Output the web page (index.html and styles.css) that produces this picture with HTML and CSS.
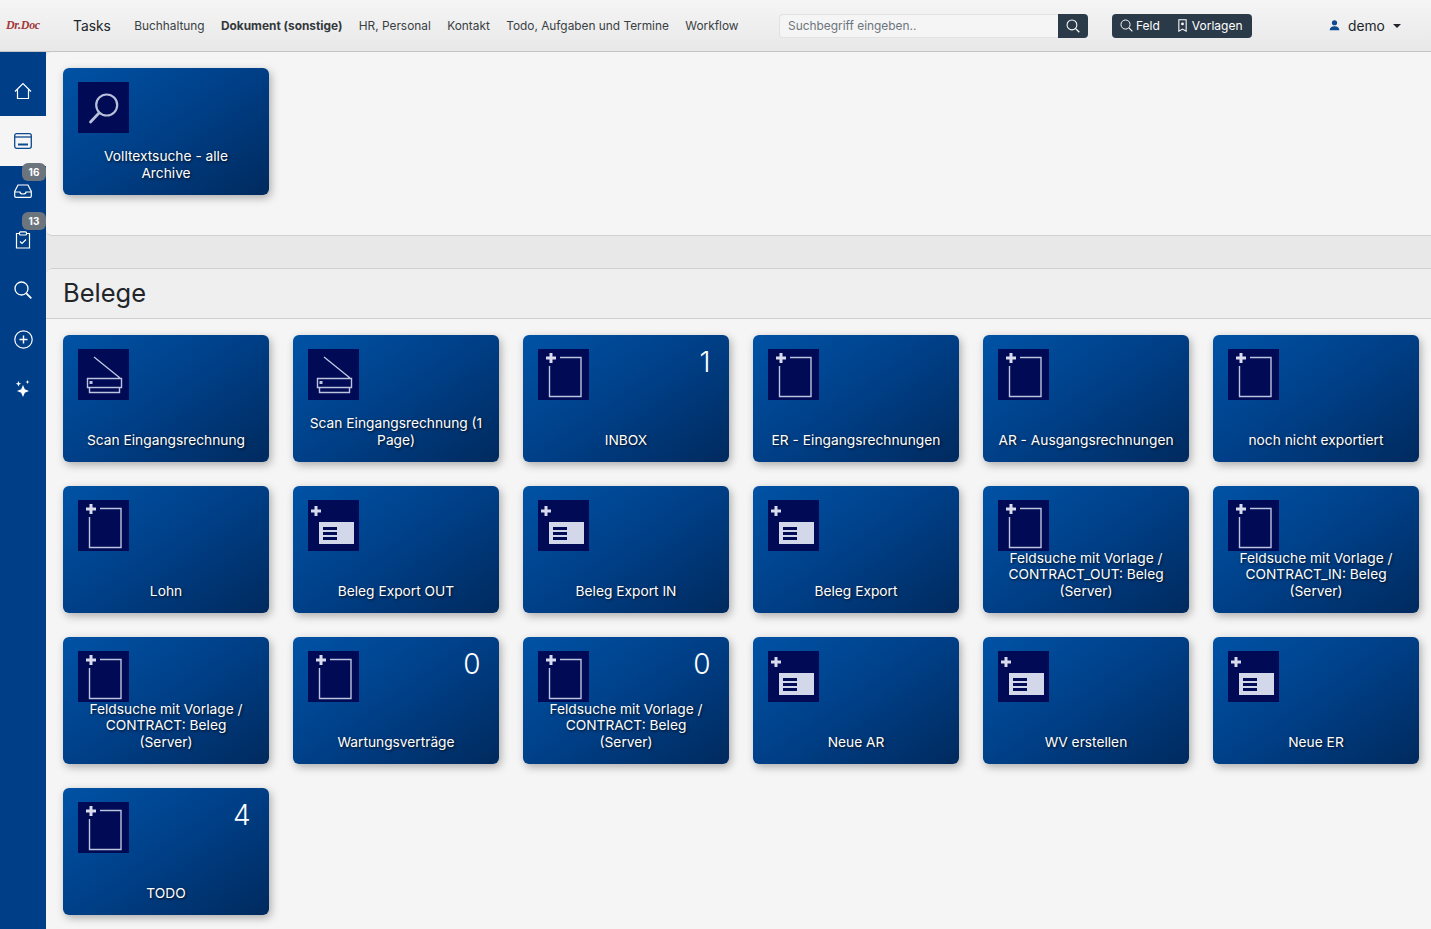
FILE: index.html
```html
<!DOCTYPE html>
<html lang="de">
<head>
<meta charset="utf-8">
<title>Dr.Doc</title>
<link rel="stylesheet" href="styles.css">
</head>
<body>
<svg class="defs" aria-hidden="true">
  <defs>
    <symbol id="i-doc" viewBox="0 0 51 51">
      <path d="M22 8.500H43V47.500H11.500V17" fill="none" stroke="#bcc4e0" stroke-width="1.400"/>
      <path d="M11.500 4h3v3.500H18v3h-3.500V14h-3v-3.500H8v-3h3.500z" fill="#d8dcee"/>
    </symbol>
    <symbol id="i-form" viewBox="0 0 51 51">
      <rect x="11" y="22" width="35" height="22" fill="#d2d8ea"/>
      <path d="M15 27h14v3H15zM15 32h14v3H15zM15 37h14v3H15z" fill="#000a55"/>
      <path d="M6.500 6h3v3.500H13v3H9.500V16h-3v-3.500H3v-3h3.500z" fill="#d8dcee"/>
    </symbol>
    <symbol id="i-scan" viewBox="0 0 51 51">
      <path d="M16 8L42 29M9.500 29.500H43.500V38.500H9.500ZM11.500 38.500V43.500H41.500V38.500" fill="none" stroke="#bcc4e0" stroke-width="1.400"/>
      <rect x="11.500" y="32" width="3" height="3" fill="#bcc4e0"/>
    </symbol>
    <symbol id="i-find" viewBox="0 0 51 51">
      <circle cx="28.700" cy="23" r="10.500" fill="none" stroke="#b8bfd8" stroke-width="2.200"/>
      <path d="M21 31L12.500 40" fill="none" stroke="#b8bfd8" stroke-width="2.800" stroke-linecap="round"/>
    </symbol>
  </defs>
</svg>

<header class="topbar">
  <div class="logo">Dr.Doc</div>
  <nav class="menu">
    <a class="menu-main">Tasks</a>
    <a>Buchhaltung</a>
    <a class="menu-active">Dokument (sonstige)</a>
    <a>HR, Personal</a>
    <a>Kontakt</a>
    <a>Todo, Aufgaben und Termine</a>
    <a>Workflow</a>
  </nav>
  <form class="search">
    <input class="search-input" type="text" placeholder="Suchbegriff eingeben..">
    <button class="search-btn" type="button" aria-label="Suche">
      <svg width="14" height="14" viewBox="0 0 16 16" fill="none" stroke="#fff" stroke-width="1.200"><circle cx="6.800" cy="6.800" r="5.600"/><path d="M11 11l4.200 4.200" stroke-width="1.500"/></svg>
    </button>
  </form>
  <div class="tools">
    <span class="tool">
      <svg width="13" height="13" viewBox="0 0 16 16" fill="none" stroke="#fff" stroke-width="1.200"><circle cx="6.800" cy="6.800" r="5.600"/><path d="M11 11l4.200 4.200" stroke-width="1.500"/></svg>Feld
    </span>
    <span class="tool tool-tpl">
      <svg width="11" height="13" viewBox="0 0 12 16" fill="none" stroke="#fff" stroke-width="1.300"><path d="M1.500 1h9v14L6 12.500 1.500 15z"/><circle cx="6" cy="6" r="1.700" fill="#fff" stroke="none"/></svg>Vorlagen
    </span>
  </div>
  <div class="user">
    <svg width="11" height="11" viewBox="0 0 16 16" fill="#0d4a8f"><circle cx="8" cy="4" r="3.800"/><path d="M1 15c0-4 3-6 7-6s7 2 7 6z"/></svg>
    <span>demo</span>
    <i class="caret"></i>
  </div>
</header>

<div class="shell">
  <aside class="sidebar">
    <a class="side-item">
      <svg width="18" height="18" viewBox="0 0 18 18" fill="none" stroke="#fff" stroke-width="1.200"><path d="M1 9.500L9 1.500l8 8M3.500 7.500V16.500h11V7.500"/></svg>
    </a>
    <a class="side-item side-active">
      <svg width="18" height="16" viewBox="0 0 18 16" fill="none" stroke="#0d4a8f" stroke-width="1.300"><rect x="0.700" y="0.700" width="16.600" height="14.600" rx="2"/><path d="M1 4h16"/><path d="M4 11.500h10" stroke-width="2"/></svg>
    </a>
    <a class="side-item">
      <svg width="18" height="14" viewBox="0 0 18 14" fill="none" stroke="#fff" stroke-width="1.200"><path d="M4 1h10l3.300 6.500V12a1.300 1.300 0 0 1-1.300 1.300H2A1.300 1.300 0 0 1 .7 12V7.500zM.7 8H6c0 1.500 1.200 2 3 2s3-.5 3-2h5.300"/></svg>
      <span class="badge">16</span>
    </a>
    <a class="side-item">
      <svg width="16" height="18" viewBox="0 0 16 18" fill="none" stroke="#fff" stroke-width="1.200"><path d="M4.500 2.500H1.500V17h13V2.500h-3"/><rect x="4.500" y="0.800" width="7" height="3.200" rx="1"/><path d="M5 10.500l2 2 4-4"/></svg>
      <span class="badge">13</span>
    </a>
    <a class="side-item">
      <svg width="18" height="18" viewBox="0 0 18 18" fill="none" stroke="#fff" stroke-width="1.300"><circle cx="7.500" cy="7.500" r="6.500"/><path d="M12.300 12.300l5 5" stroke-width="1.800"/></svg>
    </a>
    <a class="side-item">
      <svg width="19" height="19" viewBox="0 0 19 19" fill="none" stroke="#fff" stroke-width="1.200"><circle cx="9.500" cy="9.500" r="8.700"/><path d="M9.500 5.500v8M5.500 9.500h8" stroke-width="1.400"/></svg>
    </a>
    <a class="side-item">
      <svg width="16" height="19" viewBox="0 0 16 18" fill="#fff"><path d="M8 5.500l1.800 4.200L14 11.500l-4.200 1.800L8 17.500l-1.800-4.200L2 11.500l4.200-1.800zM3.500 1.500l.8 1.900 1.900.8-1.900.8-.8 1.900-.8-1.900L.8 4.200l1.900-.8zM12.500.5l.6 1.400 1.400.6-1.400.6-.6 1.400-.6-1.400-1.400-.6 1.400-.6z"/></svg>
    </a>
  </aside>

  <main class="content">
    <section class="panel panel-top">
      <div class="grid">
        <a class="card"><svg class="card-icon"><use href="#i-find"/></svg><span class="card-label">Volltextsuche - alle Archive</span></a>
      </div>
    </section>
    <div class="band"></div>
    <section class="panel">
      <h2 class="panel-title">Belege</h2>
      <div class="grid">
        <a class="card"><svg class="card-icon"><use href="#i-scan"/></svg><span class="card-label">Scan Eingangsrechnung</span></a>
        <a class="card"><svg class="card-icon"><use href="#i-scan"/></svg><span class="card-label">Scan Eingangsrechnung (1 Page)</span></a>
        <a class="card"><svg class="card-icon"><use href="#i-doc"/></svg><span class="card-count">1</span><span class="card-label">INBOX</span></a>
        <a class="card"><svg class="card-icon"><use href="#i-doc"/></svg><span class="card-label">ER - Eingangsrechnungen</span></a>
        <a class="card"><svg class="card-icon"><use href="#i-doc"/></svg><span class="card-label">AR - Ausgangsrechnungen</span></a>
        <a class="card"><svg class="card-icon"><use href="#i-doc"/></svg><span class="card-label">noch nicht exportiert</span></a>

        <a class="card"><svg class="card-icon"><use href="#i-doc"/></svg><span class="card-label">Lohn</span></a>
        <a class="card"><svg class="card-icon"><use href="#i-form"/></svg><span class="card-label">Beleg Export OUT</span></a>
        <a class="card"><svg class="card-icon"><use href="#i-form"/></svg><span class="card-label">Beleg Export IN</span></a>
        <a class="card"><svg class="card-icon"><use href="#i-form"/></svg><span class="card-label">Beleg Export</span></a>
        <a class="card"><svg class="card-icon"><use href="#i-doc"/></svg><span class="card-label">Feldsuche mit Vorlage / CONTRACT_OUT: Beleg (Server)</span></a>
        <a class="card"><svg class="card-icon"><use href="#i-doc"/></svg><span class="card-label">Feldsuche mit Vorlage / CONTRACT_IN: Beleg (Server)</span></a>

        <a class="card"><svg class="card-icon"><use href="#i-doc"/></svg><span class="card-label">Feldsuche mit Vorlage / CONTRACT: Beleg (Server)</span></a>
        <a class="card"><svg class="card-icon"><use href="#i-doc"/></svg><span class="card-count">0</span><span class="card-label">Wartungsverträge</span></a>
        <a class="card"><svg class="card-icon"><use href="#i-doc"/></svg><span class="card-count">0</span><span class="card-label">Feldsuche mit Vorlage / CONTRACT: Beleg (Server)</span></a>
        <a class="card"><svg class="card-icon"><use href="#i-form"/></svg><span class="card-label">Neue AR</span></a>
        <a class="card"><svg class="card-icon"><use href="#i-form"/></svg><span class="card-label">WV erstellen</span></a>
        <a class="card"><svg class="card-icon"><use href="#i-form"/></svg><span class="card-label">Neue ER</span></a>

        <a class="card"><svg class="card-icon"><use href="#i-doc"/></svg><span class="card-count">4</span><span class="card-label">TODO</span></a>
      </div>
    </section>
  </main>
</div>
</body>
</html>
```
FILE: styles.css
```css
* { box-sizing: border-box; }
html, body { margin: 0; height: 100%; overflow: hidden; }
body { font-family: Inter, "Liberation Sans", sans-serif; background: #003f87; color: #212529; }
.defs { width: 0; height: 0; display: block; }

.topbar {
  height: 52px;
  display: flex;
  align-items: center;
  background: linear-gradient(#f5f5f5, #e8e8e8);
  border-bottom: 1px solid #c4c4c4;
}
.logo {
  width: 73px;
  padding-left: 6px;
  font: italic bold 12px "Liberation Serif", serif;
  letter-spacing: -0.300px;
  color: #a33a3a;
}
.menu { display: flex; align-items: center; gap: 16.400px; font-size: 11.860px; color: #3a3f44; width: 706px; }
.menu-main { font-size: 13.800px; color: #212529; margin-right: 7px; }
.menu-active { font-weight: 700; color: #33383d; }

.search { display: flex; width: 309px; height: 24px; }
.search-input {
  flex: 1;
  min-width: 0;
  border: 1px solid #e2e2e2;
  border-right: 0;
  border-radius: 4px 0 0 4px;
  background: #f5f5f5;
  padding: 0 8px;
  font: 11.900px Inter, sans-serif;
}
.search-input::placeholder { color: #6c757d; opacity: 1; }
.search-btn {
  width: 30px;
  border: 0;
  padding: 0;
  background: #2b3a48;
  border-radius: 0 4px 4px 0;
  display: flex;
  align-items: center;
  justify-content: center;
}
.tools {
  margin-left: 24px;
  width: 140px;
  height: 24px;
  display: flex;
  align-items: center;
  gap: 17px;
  padding-left: 8px;
  background: #2b3a48;
  border-radius: 4px;
  color: #fff;
  font-size: 12px;
}
.tool { display: flex; align-items: center; gap: 3px; }
.tool-tpl { gap: 4px; }
.user { margin-left: 77px; display: flex; align-items: center; font-size: 13.800px; color: #212529; }
.user span { margin-left: 8px; }
.caret {
  margin-left: 8px;
  border-top: 4px solid #212529;
  border-left: 4px solid transparent;
  border-right: 4px solid transparent;
}

.shell { display: flex; height: 877px; }
.sidebar { width: 46px; flex: none; padding-top: 14.600px; background: #003f87; }
.side-item {
  position: relative;
  height: 49.600px;
  display: flex;
  align-items: center;
  justify-content: center;
  width: 46px;
}
.side-active { background: #f5f5f5; }
.badge {
  position: absolute;
  right: 0;
  top: -3px;
  width: 24px;
  height: 18px;
  border-radius: 6px;
  background: #6c757d;
  color: #fff;
  font-size: 10px;
  font-weight: 700;
  line-height: 18px;
  text-align: center;
}

.content { flex: 1; min-width: 0; background: #e8e8e8; overflow: hidden; }
.panel { background: #f5f5f5; padding-bottom: 16px; border-top-left-radius: 6px; overflow: hidden; }
.panel-top {
  height: 184px;
  padding-top: 16px;
  border-bottom: 1px solid #cfcfcf;
  border-bottom-left-radius: 6px;
}
.band { height: 32px; }
.panel-title {
  margin: 0 0 16px;
  height: 51px;
  padding: 0 17px 3px;
  display: flex;
  align-items: center;
  font-size: 25.500px;
  font-weight: 400;
  color: #212529;
  background: #efefef;
  border-top: 1px solid #cfcfcf;
  border-bottom: 1px solid #cfcfcf;
  border-top-left-radius: 6px;
}
.grid {
  display: grid;
  grid-template-columns: repeat(6, 206px);
  grid-auto-rows: 127px;
  gap: 24px;
  padding-left: 17px;
}
.card {
  display: grid;
  padding: 14px 15px 13px;
  border-radius: 6px;
  background: linear-gradient(145deg, #0052a5 0%, #003f87 50%, #002a5e 100%);
  box-shadow: 2px 3px 9px rgba(0, 0, 0, 0.3);
  color: #fff;
}
.card-icon {
  grid-area: 1 / 1;
  width: 51px;
  height: 51px;
  background: #000a55;
}
.card-label {
  grid-area: 1 / 1;
  align-self: end;
  text-align: center;
  font-size: 13.750px;
  font-weight: 400;
  line-height: 16.800px;
  text-shadow: 1px 1px 3px rgba(0, 0, 0, 0.8);
}
.card-count {
  grid-area: 1 / 1;
  justify-self: end;
  margin: -3px 3.500px 0 0;
  font-size: 28px;
  font-weight: 300;
  line-height: 32px;
}
```
